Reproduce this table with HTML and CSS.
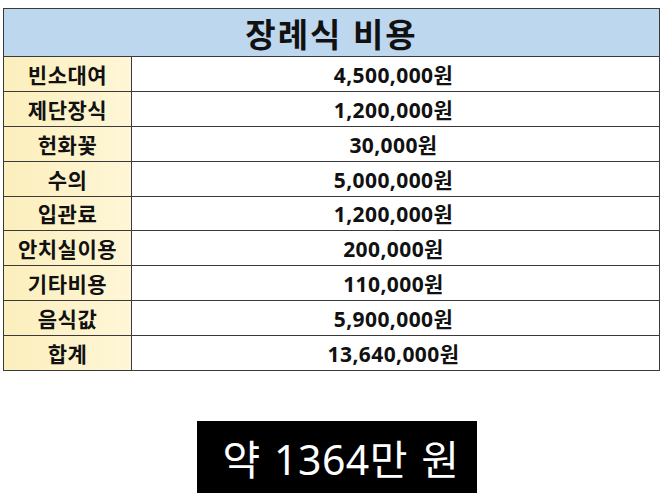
FILE: index.html
```html
<!DOCTYPE html>
<html lang="ko">
<head>
<meta charset="utf-8">
<link rel="stylesheet" href="styles.css">
</head>
<body>
<div class="page">
  <div class="table">
    <div class="head">장례식 비용</div>
    <div class="label">빈소대여</div><div class="value">4,500,000원</div>
    <div class="label">제단장식</div><div class="value">1,200,000원</div>
    <div class="label">헌화꽃</div><div class="value">30,000원</div>
    <div class="label">수의</div><div class="value">5,000,000원</div>
    <div class="label">입관료</div><div class="value">1,200,000원</div>
    <div class="label">안치실이용</div><div class="value">200,000원</div>
    <div class="label">기타비용</div><div class="value">110,000원</div>
    <div class="label">음식값</div><div class="value">5,900,000원</div>
    <div class="label">합계</div><div class="value">13,640,000원</div>
  </div>
  <div class="summary">약 1364만 원</div>
</div>
</body>
</html>
```
FILE: styles.css
```css
html, body {
  margin: 0;
  padding: 0;
  background: #ffffff;
}
.page {
  width: 672px;
  height: 498px;
  padding-top: 8px;
  box-sizing: border-box;
  display: flex;
  flex-direction: column;
  align-items: flex-start;
  font-family: "Noto Sans", "Noto Sans CJK KR", sans-serif;
}
.table {
  margin-left: 3px;
  width: 657px;
  height: 363px;
  box-sizing: border-box;
  display: grid;
  grid-template-columns: 127px 1fr;
  grid-template-rows: 47px repeat(9, 1fr);
  gap: 1px;
  padding: 1px;
  background: #3a3a3a;
}
.head {
  grid-column: 1 / 3;
  background: #bdd7ee;
  display: flex;
  align-items: center;
  justify-content: center;
  font-size: 33px;
  font-weight: 700;
  color: #111;
  letter-spacing: 2px;
  padding-top: 1px;
}
.label {
  background: linear-gradient(90deg, #fcefbd 0%, #fdf3cc 60%, #fef6d6 100%);
  display: flex;
  align-items: center;
  justify-content: center;
  font-size: 21px;
  font-weight: 700;
  color: #111;
  letter-spacing: 0.5px;
}
.value {
  background: #ffffff;
  display: flex;
  align-items: center;
  justify-content: center;
  font-size: 21px;
  font-weight: 700;
  color: #111;
  letter-spacing: 0.4px;
  padding-right: 4px;
}
.summary {
  align-self: center;
  margin-top: 50px;
  margin-left: 2px;
  width: 280px;
  height: 72px;
  box-sizing: border-box;
  background: #000;
  color: #fff;
  display: flex;
  align-items: center;
  justify-content: center;
  padding-left: 8px;
  font-size: 41px;
  font-weight: 400;
  letter-spacing: 0.5px;
  word-spacing: 2px;
}
```
